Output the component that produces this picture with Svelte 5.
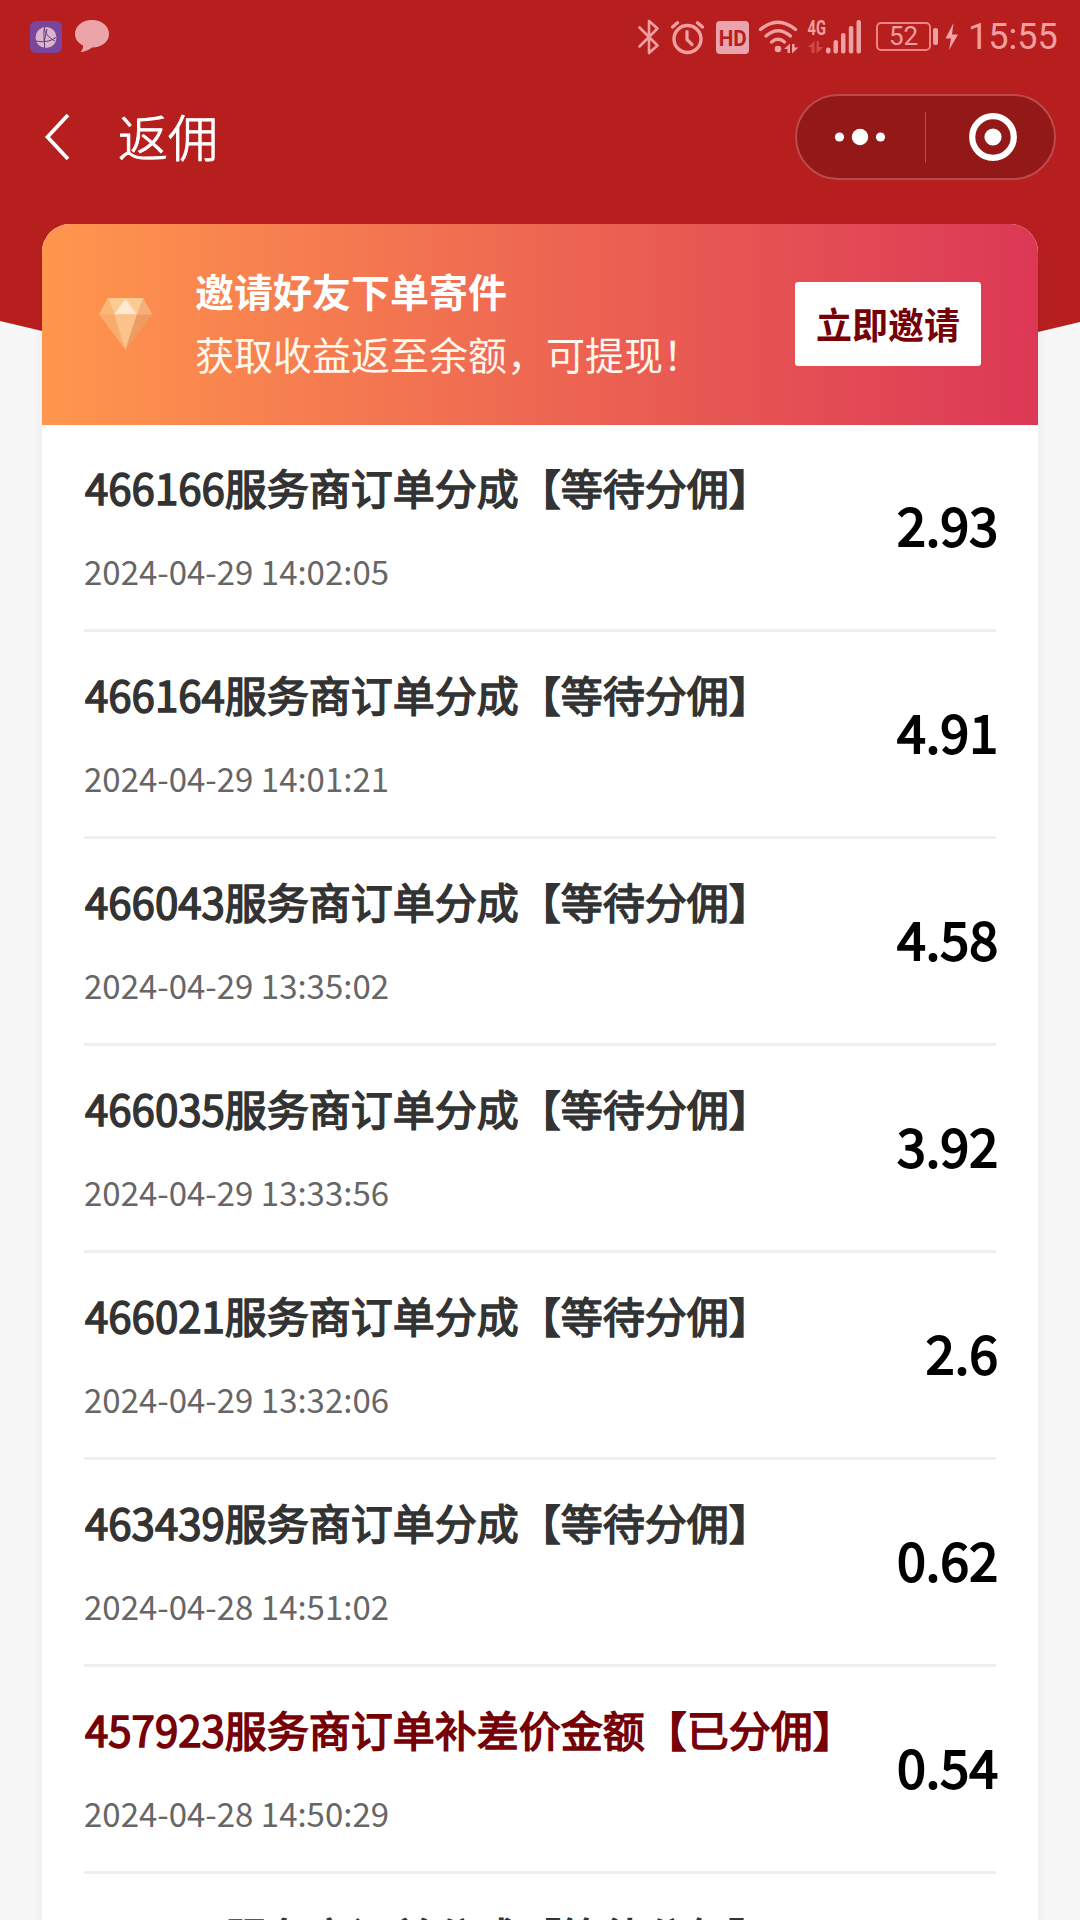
<script lang="ts">
type Order = {
  id: string;
  label: string;
  status: string;
  time: string;
  amount: string;
  settled?: boolean;
};

const orders: Order[] = [
  { id: "466166", label: "服务商订单分成", status: "等待分佣", time: "2024-04-29 14:02:05", amount: "2.93" },
  { id: "466164", label: "服务商订单分成", status: "等待分佣", time: "2024-04-29 14:01:21", amount: "4.91" },
  { id: "466043", label: "服务商订单分成", status: "等待分佣", time: "2024-04-29 13:35:02", amount: "4.58" },
  { id: "466035", label: "服务商订单分成", status: "等待分佣", time: "2024-04-29 13:33:56", amount: "3.92" },
  { id: "466021", label: "服务商订单分成", status: "等待分佣", time: "2024-04-29 13:32:06", amount: "2.6" },
  { id: "463439", label: "服务商订单分成", status: "等待分佣", time: "2024-04-28 14:51:02", amount: "0.62" },
  { id: "457923", label: "服务商订单补差价金额", status: "已分佣", time: "2024-04-28 14:50:29", amount: "0.54", settled: true },
  { id: "457923", label: "服务商订单分成", status: "等待分佣", time: "", amount: "" },
];
</script>

<div class="page">
  <header class="header">
    <div class="status">
      <svg class="status__app" width="32" height="32" viewBox="0 0 32 32">
        <rect width="32" height="32" rx="6" fill="#7a469c" />
        <circle cx="16" cy="16.5" r="10.5" fill="#dcb4cc" />
        <path d="M15 6C12.500 12 15 20 14.500 27M6 20C13 21.500 20 21 26.500 16M14 21L17 8M14 8C17 15 21 18 25 20" fill="none" stroke="#5b3a78" stroke-width="1" />
      </svg>
      <svg class="status__chat" width="34" height="33" viewBox="0 0 34 33">
        <path d="M17 0C26.500 0 34 6 34 14S26.500 27.500 17 27.500C14.500 29.500 10 32 5.500 32C7.500 30 8.500 27.500 8 25.500C3 23 0 19 0 14C0 6 7.500 0 17 0Z" fill="#eba5a8" />
      </svg>

      <svg class="status__icons" width="225" height="40" viewBox="636 16 225 40" fill="none" stroke="#f0a0a0" stroke-linecap="round">
        <path d="M639.500 26.500L657.500 44.500L649 52V20L657.500 27.500L639.500 45.500" stroke-width="2.6" stroke-linejoin="round" />
        <circle cx="687.500" cy="38" r="13.500" stroke-width="3.400" />
        <path d="M687 30.500V38.500L692 43.500" stroke-width="3.200" />
        <path d="M672.500 26L677.500 21.800M702.500 26L697.500 21.800" stroke-width="3.400" />
        <rect x="716" y="20" width="33" height="33" rx="4" fill="#eaa4ae" stroke="none" />
        <path d="M760.500 28.500Q778 14 795.500 28.500" stroke-width="3.400" />
        <path d="M766 35Q778 24.500 790.500 35" stroke-width="3.400" />
        <path d="M771.500 41Q778 35.500 784.500 41" stroke-width="3.400" />
        <g fill="#f0a0a0" stroke="none">
          <circle cx="778" cy="48" r="3.300" />
          <path d="M784 48L790 42.500V52H787.500V48ZM792 43H794.500V46.500H798.500L792 52.500Z" />
          <rect x="826" y="46.500" width="4.500" height="6" rx="2" />
          <rect x="833.500" y="39" width="4.500" height="13.500" rx="2" />
          <rect x="841" y="32" width="4.500" height="20.500" rx="2" />
          <rect x="848.800" y="25" width="4.500" height="27.500" rx="2" />
          <rect x="856.500" y="19" width="4.500" height="33.500" rx="2" />
        </g>
        <path d="M808 46L814.500 40V52H811.500V46ZM816.500 40H819V46H823.500L816.500 52.500Z" fill="#d04847" stroke="none" />
        <text x="716" y="44.500" class="status__hd" textLength="28" lengthAdjust="spacingAndGlyphs" dx="2.700">HD</text>
        <text x="807.500" y="33.500" class="status__net" textLength="18.500" lengthAdjust="spacingAndGlyphs">4G</text>
      </svg>

      <div class="battery">52</div>
      <svg class="status__bolt" width="14" height="28" viewBox="0 0 14 28">
        <path d="M8.500 0L0.500 15.500H6L4 27L13 11.500H7Z" fill="#efa4a8" />
      </svg>
      <span class="status__time">15:55</span>
    </div>

    <div class="nav">
      <svg class="nav__back" width="26" height="48" viewBox="0 0 26 48">
        <path d="M24 2L3.500 24L24 46" fill="none" stroke="#fff" stroke-width="3.800" />
      </svg>
      <h1 class="nav__title">返佣</h1>
      <div class="capsule">
        <svg class="capsule__dots" width="52" height="18" viewBox="0 0 52 18" fill="#fff">
          <circle cx="5.500" cy="9" r="4.600" />
          <circle cx="26" cy="9" r="8.200" />
          <circle cx="46.500" cy="9" r="4.600" />
        </svg>
        <span class="capsule__line"></span>
        <svg class="capsule__close" width="48" height="48" viewBox="0 0 48 48">
          <circle cx="24" cy="24" r="20.800" fill="none" stroke="#fff" stroke-width="6.200" />
          <circle cx="24" cy="24" r="8.600" fill="#fff" />
        </svg>
      </div>
    </div>
  </header>

  <main class="card">
    <section class="banner">
      <svg class="banner__gem" width="56" height="54" viewBox="0 0 56 54">
        <path d="M10 1H45L54 17.500H1Z" fill="#fccb94" />
        <path d="M10 1L17 17.500H1Z" fill="#fbb778" />
        <path d="M45 1L39 17.500H54Z" fill="#f6ae7a" />
        <path d="M27.500 2L39 17.500H16Z" fill="#ffe9d0" />
        <path d="M1 17.500H16L27.500 53Z" fill="#f8ab6c" />
        <path d="M16 17.500H39L27.500 53Z" fill="#fbc28b" />
        <path d="M39 17.500H54L27.500 53Z" fill="#ee9d62" />
        <path d="M16 17.500L27.500 53L22 41Z" fill="#f5b67d" />
      </svg>
      <div class="banner__text">
        <strong>邀请好友下单寄件</strong>
        <span>获取收益返至余额，可提现！</span>
      </div>
      <button class="banner__invite">立即邀请</button>
    </section>

    <ul class="orders">
      {#each orders as order}
        <li class="order">
          <div>
            <div class="order__title" class:settled={order.settled}>
              {order.id}{order.label}【{order.status}】
            </div>
            <div class="order__time">{order.time}</div>
          </div>
          <div class="order__amount">{order.amount}</div>
        </li>
      {/each}
    </ul>
  </main>
</div>

<style>
  :global(body) {
    background: #f7f7f7;
  }

  .page {
    width: 1080px;
    height: 1920px;
    overflow: hidden;
    background: #f7f7f7;
    font-family: "Noto Sans CJK SC", sans-serif;
  }

  .header {
    height: 345px;
    background: #b71f1f;
    clip-path: polygon(0 0, 100% 0, 100% 322px, 1038px 332px, 900px 345px, 180px 345px, 42px 331px, 0 321px);
  }

  .status {
    display: flex;
    align-items: center;
    height: 73px;
    padding: 0 22px 0 30px;
    color: #f0a0a0;
    font-family: Roboto, sans-serif;
  }

  .status__chat {
    margin-left: 13px;
  }

  .status__icons {
    margin-left: auto;
  }

  .status__hd {
    fill: #b71f1f;
    stroke: none;
    font: 700 22px Roboto, sans-serif;
  }

  .status__net {
    fill: #f0a0a0;
    stroke: none;
    font: 700 20px Roboto, sans-serif;
  }

  .battery {
    position: relative;
    box-sizing: border-box;
    width: 55px;
    height: 29px;
    margin-left: 15px;
    border: 2px solid #e98482;
    border-radius: 5px;
    font-size: 26px;
    line-height: 25px;
    text-align: center;
  }

  .battery::after {
    content: "";
    position: absolute;
    top: 4px;
    right: -9px;
    width: 5px;
    height: 17px;
    border-radius: 2px;
    background: #f0a0a0;
  }

  .status__bolt {
    margin-left: 14px;
  }

  .status__time {
    width: 90px;
    margin-left: 9px;
    font-size: 36px;
    line-height: 44px;
  }

  .nav {
    display: flex;
    align-items: center;
    height: 128px;
    padding: 0 24px 0 44px;
  }

  .nav__title {
    margin: 0 0 4px 48px;
    color: #fff;
    font-size: 50px;
    font-weight: 300;
    line-height: 60px;
    -webkit-text-stroke: 0.9px currentColor;
  }

  .capsule {
    display: flex;
    align-items: center;
    box-sizing: border-box;
    width: 261px;
    height: 86px;
    margin-left: auto;
    border: 2px solid #bd4a49;
    border-radius: 43px;
    background: #931919;
  }

  .capsule__dots {
    margin-left: 37px;
  }

  .capsule__line {
    width: 1px;
    height: 51px;
    margin-left: 39px;
    background: #b44e4e;
  }

  .capsule__close {
    margin-left: 43px;
  }

  .card {
    position: relative;
    width: 996px;
    margin: -121px auto 0;
    border-radius: 28px 28px 0 0;
    background: #fff;
    box-shadow: 0 10px 12px rgba(0, 0, 0, 0.06);
  }

  .banner {
    display: flex;
    align-items: center;
    box-sizing: border-box;
    height: 201px;
    padding: 0 57px 2px 56px;
    border-radius: 28px 28px 0 0;
    background: linear-gradient(90deg, #ff964d, #dc3856);
  }

  .banner__text {
    display: flex;
    flex-direction: column;
    margin: 0 0 3px 41px;
    color: #fff;
    font-size: 39px;
    line-height: 63px;
  }

  .banner__text strong {
    font-weight: 700;
  }

  .banner__text span {
    color: #fff6ec;
  }

  .banner__invite {
    width: 186px;
    height: 84px;
    margin-left: auto;
    padding: 0 0 2px;
    border: 0;
    border-radius: 3px;
    background: #fff;
    color: #750006;
    font-family: inherit;
    font-size: 36px;
    font-weight: 700;
  }

  .orders {
    margin: 0;
    padding: 0 40px 0 42px;
    list-style: none;
  }

  .order {
    display: flex;
    align-items: center;
    justify-content: space-between;
    box-sizing: border-box;
    height: 207px;
    background: linear-gradient(#eee, #eee) 0 100% / 912px 3px no-repeat;
  }

  .order__title {
    padding-left: 1px;
    color: #333;
    font-size: 42px;
    line-height: 60px;
    -webkit-text-stroke: 1.5px currentColor;
  }

  .order__title.settled {
    color: #750006;
  }

  .order__time {
    height: 48px;
    margin: 30px 0 5px;
    color: #666;
    font-size: 33px;
    line-height: 48px;
  }

  .order__amount {
    margin-bottom: 11px;
    color: #000;
    font-size: 52px;
    -webkit-text-stroke: 1.8px currentColor;
  }
</style>
